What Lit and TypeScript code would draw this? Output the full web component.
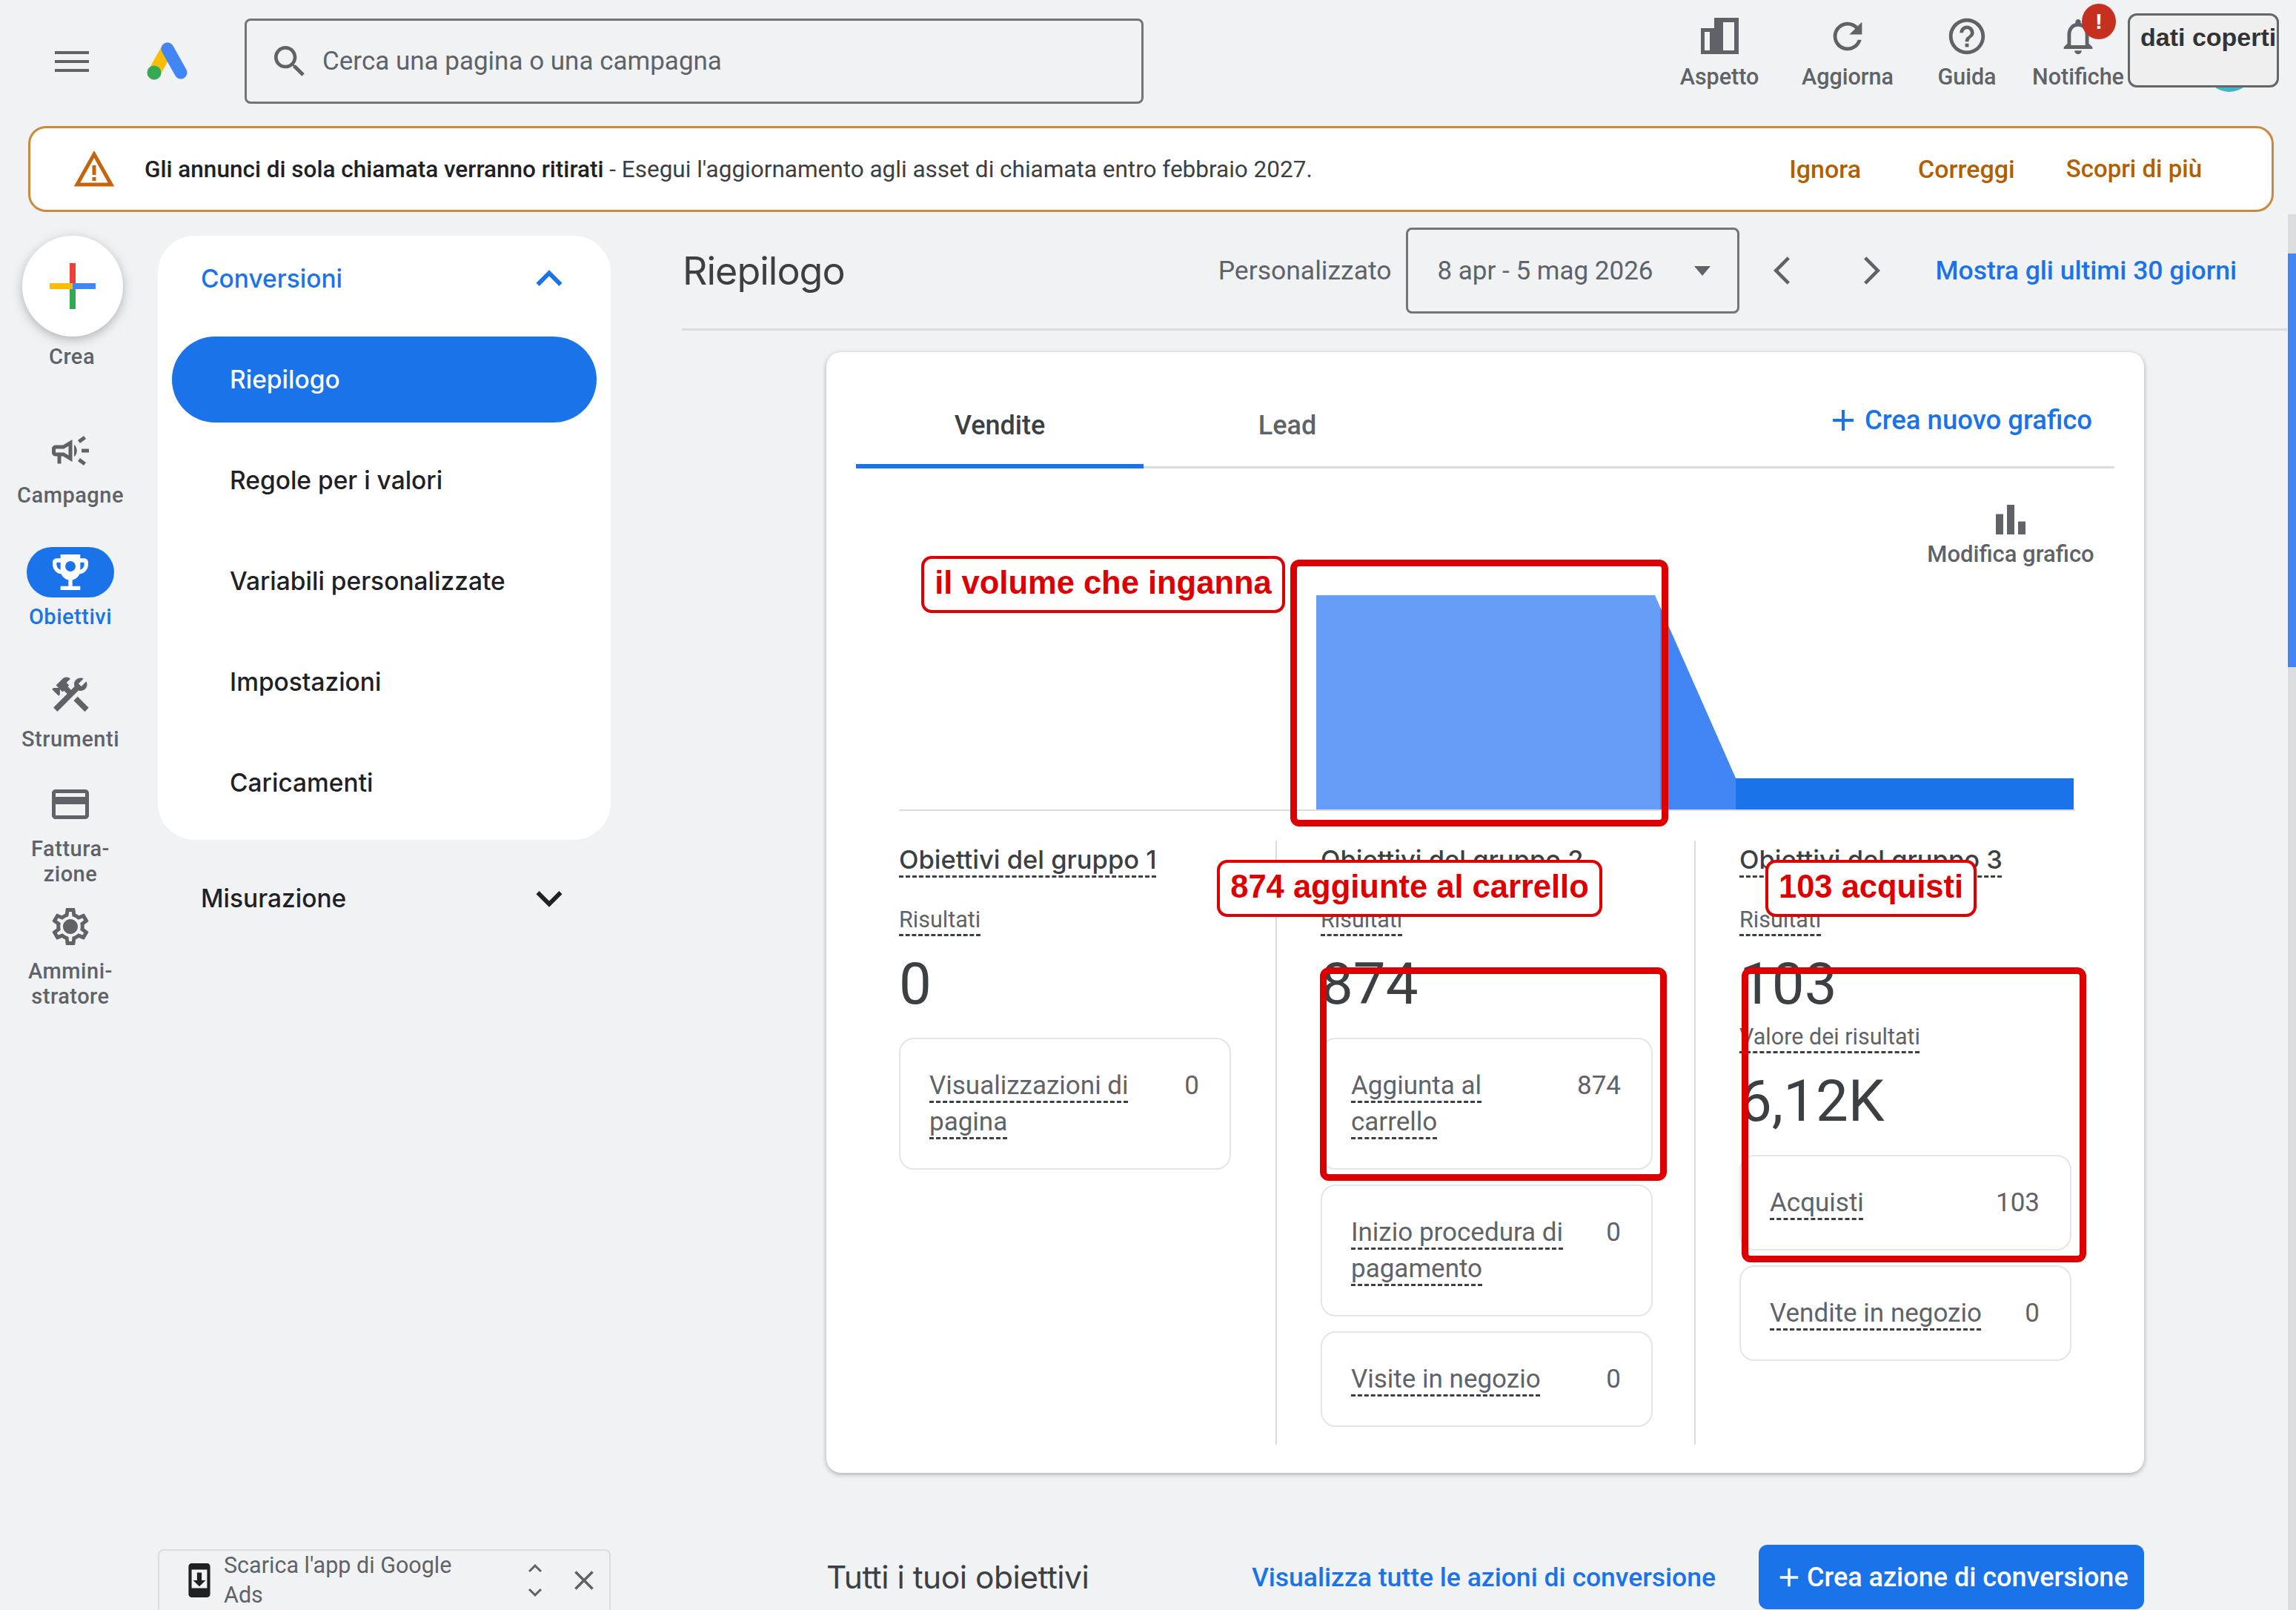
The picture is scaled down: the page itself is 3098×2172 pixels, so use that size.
import { LitElement, html, css } from 'lit';
import { customElement } from 'lit/decorators.js';

// material icon paths, 24x24
const P = {
  search: 'M15.5 14h-.79l-.28-.27C15.41 12.59 16 11.11 16 9.5 16 5.91 13.09 3 9.5 3S3 5.91 3 9.5 5.91 16 9.5 16c1.61 0 3.09-.59 4.23-1.57l.27.28v.79l5 4.99L20.49 19l-4.99-5zm-6 0C7.01 14 5 11.99 5 9.5S7.01 5 9.5 5 14 7.01 14 9.5 11.99 14 9.5 14z',
  refresh: 'M17.65 6.35C16.2 4.9 14.21 4 12 4c-4.42 0-7.99 3.58-7.99 8s3.57 8 7.99 8c3.73 0 6.84-2.55 7.73-6h-2.08c-.82 2.33-3.04 4-5.65 4-3.31 0-6-2.69-6-6s2.69-6 6-6c1.66 0 3.14.69 4.22 1.78L13 11h7V4l-2.35 2.35z',
  help: 'M11 18h2v-2h-2v2zm1-16C6.48 2 2 6.48 2 12s4.48 10 10 10 10-4.48 10-10S17.52 2 12 2zm0 18c-4.41 0-8-3.59-8-8s3.59-8 8-8 8 3.59 8 8-3.59 8-8 8zm0-14c-2.21 0-4 1.79-4 4h2c0-1.1.9-2 2-2s2 .9 2 2c0 2-3 1.75-3 5h2c0-2.25 3-2.5 3-5 0-2.21-1.79-4-4-4z',
  bell: 'M12 22c1.1 0 2-.9 2-2h-4c0 1.1.9 2 2 2zm6-6v-5c0-3.07-1.63-5.64-4.5-6.32V4c0-.83-.67-1.5-1.5-1.5s-1.5.67-1.5 1.5v.68C7.64 5.36 6 7.92 6 11v5l-2 2v1h16v-1l-2-2zm-2 1H8v-6c0-2.48 1.51-4.5 4-4.5s4 2.02 4 4.5v6z',
  campaign: 'M18 11v2h4v-2h-4zm-2 6.61c.96.71 2.21 1.65 3.2 2.39.4-.53.8-1.07 1.2-1.6-.99-.74-2.24-1.68-3.2-2.4-.4.54-.8 1.08-1.2 1.61zM20.4 5.6c-.4-.53-.8-1.07-1.2-1.6-.99.74-2.24 1.68-3.2 2.4.4.53.8 1.07 1.2 1.6.96-.72 2.21-1.65 3.2-2.4zM4 9c-1.1 0-2 .9-2 2v2c0 1.1.9 2 2 2h1v4h2v-4h1l5 3V6L8 9H4zm5.03 1.71L11 9.53v4.94l-1.97-1.18-.48-.29H4v-2h4.55l.48-.29zM15.5 12c0-1.33-.58-2.53-1.5-3.35v6.69c.92-.81 1.5-2.01 1.5-3.34z',
  trophy: 'M19 5h-2V3H7v2H5c-1.1 0-2 .9-2 2v1c0 2.55 1.92 4.63 4.39 4.94.63 1.5 1.98 2.63 3.61 2.96V19H7v2h10v-2h-4v-3.1c1.63-.33 2.98-1.46 3.61-2.96C19.08 12.63 21 10.55 21 8V7c0-1.1-.9-2-2-2zM5 8V7h2v3.82C5.84 10.4 5 9.3 5 8zm14 0c0 1.3-.84 2.4-2 2.82V7h2v1z',
  tools: 'M13.78 15.3l6 6 2.11-2.16-6-6zM17.5 10c1.93 0 3.5-1.57 3.5-3.5 0-.58-.16-1.12-.41-1.6l-2.7 2.7-1.49-1.49 2.7-2.7c-.48-.25-1.02-.41-1.6-.41C15.57 3 14 4.57 14 6.5c0 .41.08.8.21 1.16l-1.85 1.85-1.78-1.78.71-.71-1.41-1.41L12 3.49c-1.17-1.17-3.07-1.17-4.24 0L4.22 7.03l1.41 1.41H2.81l-.71.71 3.54 3.54.71-.71V9.15l1.41 1.41.71-.71 1.78 1.78-7.41 7.41 2.12 2.12L16.34 9.79c.36.13.75.21 1.16.21z',
  card: 'M20 4H4c-1.11 0-1.99.89-1.99 2L2 18c0 1.11.89 2 2 2h16c1.11 0 2-.89 2-2V6c0-1.11-.89-2-2-2zm0 14H4v-6h16v6zm0-10H4V6h16v2z',
  gear: 'M19.43 12.98c.04-.32.07-.64.07-.98 0-.34-.03-.66-.07-.98l2.11-1.65c.19-.15.24-.42.12-.64l-2-3.46c-.09-.16-.26-.25-.44-.25-.06 0-.12.01-.17.03l-2.49 1c-.52-.4-1.08-.73-1.69-.98l-.38-2.65C14.46 2.18 14.25 2 14 2h-4c-.25 0-.46.18-.49.42l-.38 2.65c-.61.25-1.17.59-1.69.98l-2.49-1c-.06-.02-.12-.03-.18-.03-.17 0-.34.09-.43.25l-2 3.46c-.13.22-.07.49.12.64l2.11 1.65c-.04.32-.07.65-.07.98 0 .33.03.66.07.98l-2.11 1.65c-.19.15-.24.42-.12.64l2 3.46c.09.16.26.25.44.25.06 0 .12-.01.17-.03l2.49-1c.52.4 1.08.73 1.69.98l.38 2.65c.03.24.24.42.49.42h4c.25 0 .46-.18.49-.42l.38-2.65c.61-.25 1.17-.59 1.69-.98l2.49 1c.06.02.12.03.18.03.17 0 .34-.09.43-.25l2-3.46c.12-.22.07-.49-.12-.64l-2.11-1.65zm-1.98-1.71c.04.31.05.52.05.73 0 .21-.02.43-.05.73l-.14 1.13.89.7 1.08.84-.7 1.21-1.27-.51-1.04-.42-.9.68c-.43.32-.84.56-1.25.73l-1.06.43-.16 1.13-.2 1.35h-1.4l-.19-1.35-.16-1.13-1.06-.43c-.43-.18-.83-.41-1.23-.71l-.91-.7-1.06.43-1.27.51-.7-1.21 1.08-.84.89-.7-.14-1.13c-.03-.31-.05-.54-.05-.74s.02-.43.05-.73l.14-1.13-.89-.7-1.08-.84.7-1.21 1.27.51 1.04.42.9-.68c.43-.32.84-.56 1.25-.73l1.06-.43.16-1.13.2-1.35h1.39l.19 1.35.16 1.13 1.06.43c.43.18.83.41 1.23.71l.91.7 1.06-.43 1.27-.51.7 1.21-1.07.85-.89.7.14 1.13zM12 8c-2.21 0-4 1.79-4 4s1.79 4 4 4 4-1.79 4-4-1.79-4-4-4z',
  bars: 'M4 9h4v11H4zM10 4h4v16h-4zM16 13h4v7h-4z',
  plus: 'M19 13h-6v6h-2v-6H5v-2h6V5h2v6h6v2z',
  close: 'M19 6.41L17.59 5 12 10.59 6.41 5 5 6.41 10.59 12 5 17.59 6.41 19 12 13.41 17.59 19 19 17.59 13.41 12z',
  phone: 'M17 1H7c-1.1 0-2 .9-2 2v18c0 1.1.9 2 2 2h10c1.1 0 2-.9 2-2V3c0-1.1-.9-2-2-2zm0 16H7V5h10v12zm-5-1l4-4h-2.5V7h-3v5H8l4 4z',
  up: 'M7.4 15.4L12 10.8l4.6 4.6L18 14l-6-6-6 6z',
  down: 'M7.4 8.6L12 13.2l4.6-4.6L18 10l-6 6-6-6z',
  left: 'M15.4 5.4L14 4l-8 8 8 8 1.4-1.4L8.8 12z',
  right: 'M8.6 18.6L10 20l8-8-8-8-1.4 1.4L15.2 12z',
};

const ico = (d: string, cls = '') => html`<svg class="ic ${cls}" viewBox="0 0 24 24"><path d=${d}></path></svg>`;
const u = (t: string) => html`<span class="u">${t}</span>`;

@customElement('app-root')
export class AppRoot extends LitElement {
  static styles = css`
    :host { display: block; }
    * { box-sizing: border-box; }
    .page {
      position: relative; width: 3098px; height: 2172px; overflow: hidden;
      background: #f0f2f4; color: #3c4043;
      font-family: Roboto, "Liberation Sans", sans-serif;
    }
    .ic { display: block; fill: currentColor; }
    .u {
      text-decoration: underline dashed #3c4043 3px;
      text-underline-offset: 9px;
    }

    /* top bar */
    .top { display: flex; align-items: center; height: 170px; color: #5f6368; }
    .burger { width: 46px; margin: -4px 0 0 74px; display: grid; gap: 8px; }
    .burger i { display: block; height: 4px; background: #5f6368; }
    .logo { width: 58px; height: 54px; margin: -6px 0 0 77px; }
    .search {
      display: flex; align-items: center; width: 1213px; height: 115px; margin: -5px 0 0 75px;
      border: 3px solid #70757a; border-radius: 8px; padding-left: 30px;
      font-size: 35px; color: #5f6368;
    }
    .search .ic { width: 56px; height: 56px; margin-right: 16px; }
    .acts { display: flex; margin-left: auto; padding-right: 218px; margin-top: -28px; }
    .act { display: flex; flex-direction: column; align-items: center; font-size: 30.5px; font-weight: 500; }
    .act:nth-child(1) { width: 172px; }
    .act:nth-child(2) { width: 174px; }
    .act:nth-child(3) { width: 148px; }
    .act:nth-child(4) { width: 152px; }
    .act .box { height: 56px; display: flex; align-items: center; justify-content: center; }
    .act .ic { width: 58px; height: 58px; }
    .act span { margin-top: 9px; line-height: 36px; }
    .act .tall { width: 51px; height: 49px; }
    .badge {
      position: absolute; left: 2809px; top: 5px; width: 46px; height: 48px; border-radius: 50%;
      background: #c5301f; color: #fff; font: 700 30px/48px "Liberation Sans", sans-serif; text-align: center;
    }
    .avatar { position: absolute; left: 2976px; top: 60px; width: 64px; height: 64px; border-radius: 50%; background: #3fb6c4; }
    .cover {
      position: absolute; left: 2871px; top: 18px; width: 204px; height: 100px;
      background: #efefef; border: 3px solid #666; border-radius: 12px;
      font: 700 34px/44px "Liberation Sans", sans-serif; color: #333; padding: 7px 0 0 14px; white-space: nowrap;
    }

    /* alert */
    .banner {
      display: flex; align-items: center; width: 3030px; height: 116px; margin-left: 38px;
      background: #fff; border: 3px solid #c98a3e; border-radius: 24px; padding: 0 94px 0 59px;
      font-size: 31.5px; color: #3c4043;
    }
    .banner svg { width: 54px; height: 48px; margin-right: 41px; flex: none; }
    .banner b { font-weight: 500; color: #202124; }
    .fix { margin-left: auto; display: flex; gap: 77px; color: #b06000; font-weight: 500; font-size: 34px; }
    .fix span:last-child { margin-left: -8px; font-size: 33px; }

    .body { display: flex; height: 1886px; }

    /* rail */
    .rail { width: 190px; padding-top: 32px; display: flex; flex-direction: column; align-items: center;
      font-size: 29px; font-weight: 500; color: #5f6368; text-align: center; letter-spacing: .5px; line-height: 34px; }
    .fab {
      width: 136px; height: 136px; border-radius: 50%; background: #fff;
      box-shadow: 0 4px 14px rgba(60,64,67,.35); display: grid; place-items: center; margin-left: 6px;
    }
    .fab svg { width: 62px; height: 62px; }
    .crea { margin-top: 10px; margin-left: 4px; }
    .ri { display: flex; flex-direction: column; align-items: center; width: 190px; }
    .ri .ib { height: 68px; width: 118px; display: grid; place-items: center; margin-bottom: 9px; }
    .ri .ic { width: 60px; height: 60px; }
    .m76 { margin-top: 76px; } .m53 { margin-top: 53px; } .m54 { margin-top: 54px; }
    .m37 { margin-top: 37px; } .m20 { margin-top: 20px; }
    .ri.on { color: #1a73e8; }
    .ri.on .ib { background: #1a73e8; border-radius: 34px; color: #fff; }
    .ri.on .ic { width: 64px; height: 64px; }

    /* nav */
    .navcol { width: 611px; margin-left: 23px; padding-top: 32px; display: flex; flex-direction: column; }
    .nav { background: #fff; border-radius: 50px; height: 815px; padding: 0 19px; }
    .nh { display: flex; align-items: center; justify-content: space-between; height: 116px; padding: 0 29px 0 39px;
      font: 500 33.5px Inter, Roboto, sans-serif; }
    .nh .ic { width: 70px; height: 70px; }
    .nav .nh { color: #1a73e8; margin-bottom: 20px; }
    .ni { height: 116px; margin-bottom: 20px; padding-left: 78px; border-radius: 58px;
      font: 500 33.5px/116px Inter, Roboto, sans-serif; color: #202124; }
    .ni.on { background: #1a73e8; color: #fff; }
    .navcol > .nh { margin: 21px 19px 0; color: #202124; }
    .app {
      margin-top: auto; height: 82px; border: 2px solid #dadce0; border-bottom: 0; border-radius: 8px 8px 0 0;
      display: flex; align-items: center; padding: 0 0 0 29px; font-size: 30.5px; line-height: 40px; color: #5f6368;
    }
    .app .ph { width: 50px; height: 50px; color: #202124; margin-right: 8px; flex: none; }
    .app p { margin: 0; width: 330px; flex: none; }
    .updown { margin-left: 70px; width: 40px; color: #5f6368; }
    .updown .ic { width: 40px; height: 36px; margin: -4px 0; }
    .app .x { width: 44px; height: 44px; margin-left: 24px; flex: none; }

    /* main */
    .main { margin-left: 96px; width: 2166px; }
    .head { display: flex; align-items: center; height: 160px; padding: 1px 68px 0 1px; border-bottom: 3px solid #dadce0; }
    .head h1 { margin: 0; font: 400 52px Inter, Roboto, sans-serif; color: #3c4043; letter-spacing: -1px; }
    .pers { margin-left: auto; font-size: 35.5px; color: #5f6368; }
    .date { display: flex; align-items: center; justify-content: space-between; width: 450px; height: 116px; margin-left: 20px;
      border: 3px solid #70757a; border-radius: 8px; padding: 0 36px 0 39px; font-size: 35px; color: #5f6368; }
    .tri { width: 0; height: 0; border: 11px solid transparent; border-top: 13px solid #5f6368; border-bottom: 0; }
    .chev { width: 56px; height: 56px; color: #5f6368; }
    .chev.a { margin-left: 32px; }
    .chev.b { margin-left: 60px; }
    .link { color: #1a73e8; font-weight: 500; }
    .head .link { font-size: 35.5px; margin-left: 60px; }

    .card { position: relative; width: 1778px; height: 1512px; margin: 29px 0 0 195px; background: #fff; border-radius: 20px;
      box-shadow: 0 2px 6px rgba(60,64,67,.4); padding: 0 40px; }
    .tabs { display: flex; align-items: flex-end; height: 157px; border-bottom: 3px solid #dadce0; font-size: 36px; font-weight: 500; }
    .tab { width: 388px; height: 107px; text-align: center; line-height: 98px; color: #5f6368; margin-bottom: -3px; }
    .tab.on { color: #3c4043; border-bottom: 6px solid #1a73e8; }
    .new { margin-left: auto; display: flex; align-items: center; height: 107px; padding: 0 30px 18px 0; color: #1a73e8; font-size: 36.5px; font-weight: 500; }
    .new .ic { width: 48px; height: 48px; margin-right: 5px; }
    .mod { position: absolute; left: 1480px; top: 196px; width: 236px; text-align: center; color: #5f6368; font-size: 31px; font-weight: 500; }
    .mod .ic { width: 60px; height: 60px; margin: 0 auto -2px; }
    .plot { display: block; width: 1587px; height: 462px; margin-left: 58px; }
    .cols { display: grid; grid-template-columns: 508px 565px 1fr; margin: 40px 0 0 58px; height: 815px; }
    .col { padding-top: 4px; }
    .col + .col { border-left: 2px solid #dadce0; padding-left: 59px; }
    .gt { font: 500 34.5px/44px Inter, Roboto, sans-serif; color: #3c4043; }
    .lbl { margin-top: 38px; font-size: 30.5px; line-height: 42px; color: #5f6368; }
    .num { margin-top: 21px; font-size: 78px; line-height: 90px; color: #3c4043; }
    .num + .lbl { margin-top: 5px; }
    .tiles { display: grid; gap: 20px; margin-top: 27px; width: 448px; }
    .tile { display: flex; justify-content: space-between; gap: 20px; padding: 38px 41px 38px 39px; border: 2px solid #e3e5e8; border-radius: 20px;
      font-size: 35px; line-height: 49px; color: #5f6368; }

    .foot { display: flex; align-items: center; height: 87px; margin: 97px 0 0 195px; width: 1778px; }
    .foot h2 { margin: 0; font: 400 42.5px Inter, Roboto, sans-serif; color: #3c4043; letter-spacing: -.5px; }
    .foot .link { margin-left: auto; font-size: 35.5px; }
    .btn { display: flex; align-items: center; height: 87px; width: 520px; margin-left: 58px; padding-left: 20px; background: #1a73e8; color: #fff;
      border-radius: 12px; font-size: 36px; font-weight: 500; white-space: nowrap; }
    .btn .ic { width: 42px; height: 42px; margin-right: 3px; }

    /* scrollbar */
    .track { position: absolute; left: 3087px; top: 289px; width: 11px; height: 1883px; background: #dadce0; }
    .thumb { position: absolute; left: 3087px; top: 342px; width: 11px; height: 558px; background: #4285f4; }

    /* red notes drawn on the screenshot */
    .rb { position: absolute; border: 9px solid #dd0000; border-radius: 12px; }
    .r1 { left: 1741px; top: 755px; width: 510px; height: 360px; }
    .r2 { left: 1781px; top: 1305px; width: 468px; height: 288px; }
    .r3 { left: 2350px; top: 1305px; width: 465px; height: 398px; }
    .note {
      position: absolute; height: 77px; background: #fff; border: 4px solid #dd0000; border-radius: 14px;
      color: #dd0000; font: 700 43.5px/65px "Liberation Sans", sans-serif; text-align: center; white-space: nowrap;
    }
    .n1 { left: 1243px; top: 750px; width: 491px; }
    .n2 { left: 1642px; top: 1160px; width: 520px; }
    .n3 { left: 2382px; top: 1160px; width: 285px; }
  `;

  render() {
    return html`
      <div class="page">
        <header class="top">
          <div class="burger"><i></i><i></i><i></i></div>
          <svg class="logo" viewBox="0 0 58 54">
            <path d="M29 11 L11 43" stroke="#fbbc04" stroke-width="17" stroke-linecap="round"></path>
            <path d="M29 11 L47 43" stroke="#4285f4" stroke-width="17" stroke-linecap="round"></path>
            <circle cx="11" cy="43" r="9.5" fill="#34a853"></circle>
          </svg>
          <div class="search">${ico(P.search)}Cerca una pagina o una campagna</div>
          <div class="acts">
            <div class="act">
              <div class="box">
                <svg class="ic tall" viewBox="0 0 51 49"><path fill-rule="evenodd" d="M18 0H51V49H0V14H18ZM5 19V44H12V19ZM30 6V44H45V6Z"></path></svg>
              </div>
              <span>Aspetto</span>
            </div>
            <div class="act"><div class="box">${ico(P.refresh)}</div><span>Aggiorna</span></div>
            <div class="act"><div class="box">${ico(P.help)}</div><span>Guida</span></div>
            <div class="act"><div class="box">${ico(P.bell)}</div><span>Notifiche</span></div>
          </div>
        </header>
        <div class="badge">!</div>
        <div class="avatar"></div>
        <div class="cover">dati coperti</div>

        <section class="banner">
          <svg viewBox="0 0 54 48">
            <path d="M27 4 L50 45 H4 Z" fill="none" stroke="#c5640f" stroke-width="5"></path>
            <path d="M24.5 19h5v13h-5zM24.5 35h5v5h-5z" fill="#c5640f"></path>
          </svg>
          <span><b>Gli annunci di sola chiamata verranno ritirati</b> - Esegui l'aggiornamento agli asset di chiamata entro febbraio 2027.</span>
          <div class="fix"><span>Ignora</span><span>Correggi</span><span>Scopri di più</span></div>
        </section>

        <div class="body">
          <aside class="rail">
            <div class="fab">
              <svg viewBox="0 0 62 62">
                <rect x="27" y="0" width="8" height="31" fill="#ea4335"></rect>
                <rect x="27" y="31" width="8" height="31" fill="#34a853"></rect>
                <rect x="0" y="27" width="31" height="8" fill="#fbbc04"></rect>
                <rect x="31" y="27" width="31" height="8" fill="#4285f4"></rect>
              </svg>
            </div>
            <div class="crea">Crea</div>
            <div class="ri m76"><div class="ib">${ico(P.campaign)}</div>Campagne</div>
            <div class="ri on m53">
              <div class="ib">
                <svg class="ic" viewBox="0 0 24 24"><path d=${P.trophy}></path><circle cx="12" cy="9" r="2.6" fill="#1a73e8"></circle></svg>
              </div>
              Obiettivi
            </div>
            <div class="ri m54"><div class="ib">${ico(P.tools)}</div>Strumenti</div>
            <div class="ri m37"><div class="ib">${ico(P.card)}</div>Fattura-<br />zione</div>
            <div class="ri m20"><div class="ib">${ico(P.gear)}</div>Ammini-<br />stratore</div>
          </aside>

          <div class="navcol">
            <nav class="nav">
              <div class="nh"><span>Conversioni</span>${ico(P.up)}</div>
              <div class="ni on">Riepilogo</div>
              <div class="ni">Regole per i valori</div>
              <div class="ni">Variabili personalizzate</div>
              <div class="ni">Impostazioni</div>
              <div class="ni">Caricamenti</div>
            </nav>
            <div class="nh"><span>Misurazione</span>${ico(P.down)}</div>
            <div class="app">
              ${ico(P.phone, 'ph')}
              <p>Scarica l'app di Google Ads</p>
              <div class="updown">${ico(P.up)}${ico(P.down)}</div>
              ${ico(P.close, 'x')}
            </div>
          </div>

          <main class="main">
            <div class="head">
              <h1>Riepilogo</h1>
              <span class="pers">Personalizzato</span>
              <div class="date">8 apr - 5 mag 2026<i class="tri"></i></div>
              ${ico(P.left, 'chev a')}${ico(P.right, 'chev b')}
              <span class="link">Mostra gli ultimi 30 giorni</span>
            </div>

            <section class="card">
              <div class="tabs">
                <div class="tab on">Vendite</div>
                <div class="tab">Lead</div>
                <div class="new">${ico(P.plus)}Crea nuovo grafico</div>
              </div>
              <div class="mod">${ico(P.bars)}Modifica grafico</div>
              <svg class="plot" viewBox="0 0 1587 462">
                <path d="M563 171 H1020 L1129 418 V461 H563 Z" fill="#669df6"></path>
                <path d="M1027 187 L1129 418 V461 H1027 Z" fill="#4285f4"></path>
                <rect x="1129" y="418" width="456" height="43" fill="#1a73e8"></rect>
                <rect x="0" y="460" width="1587" height="2" fill="#dadce0"></rect>
              </svg>
              <div class="cols">
                <div class="col">
                  <div class="gt">${u('Obiettivi del gruppo 1')}</div>
                  <div class="lbl">${u('Risultati')}</div>
                  <div class="num">0</div>
                  <div class="tiles">
                    <div class="tile"><span>${u('Visualizzazioni di pagina')}</span><span>0</span></div>
                  </div>
                </div>
                <div class="col">
                  <div class="gt">${u('Obiettivi del gruppo 2')}</div>
                  <div class="lbl">${u('Risultati')}</div>
                  <div class="num">874</div>
                  <div class="tiles">
                    <div class="tile"><span>${u('Aggiunta al carrello')}</span><span>874</span></div>
                    <div class="tile"><span>${u('Inizio procedura di pagamento')}</span><span>0</span></div>
                    <div class="tile"><span>${u('Visite in negozio')}</span><span>0</span></div>
                  </div>
                </div>
                <div class="col">
                  <div class="gt">${u('Obiettivi del gruppo 3')}</div>
                  <div class="lbl">${u('Risultati')}</div>
                  <div class="num">103</div>
                  <div class="lbl">${u('Valore dei risultati')}</div>
                  <div class="num">6,12K</div>
                  <div class="tiles">
                    <div class="tile"><span>${u('Acquisti')}</span><span>103</span></div>
                    <div class="tile"><span>${u('Vendite in negozio')}</span><span>0</span></div>
                  </div>
                </div>
              </div>
            </section>

            <div class="foot">
              <h2>Tutti i tuoi obiettivi</h2>
              <span class="link">Visualizza tutte le azioni di conversione</span>
              <div class="btn">${ico(P.plus)}Crea azione di conversione</div>
            </div>
          </main>
        </div>

        <div class="track"></div>
        <div class="thumb"></div>

        <div class="rb r1"></div>
        <div class="rb r2"></div>
        <div class="rb r3"></div>
        <div class="note n1">il volume che inganna</div>
        <div class="note n2">874 aggiunte al carrello</div>
        <div class="note n3">103 acquisti</div>
      </div>
    `;
  }
}
